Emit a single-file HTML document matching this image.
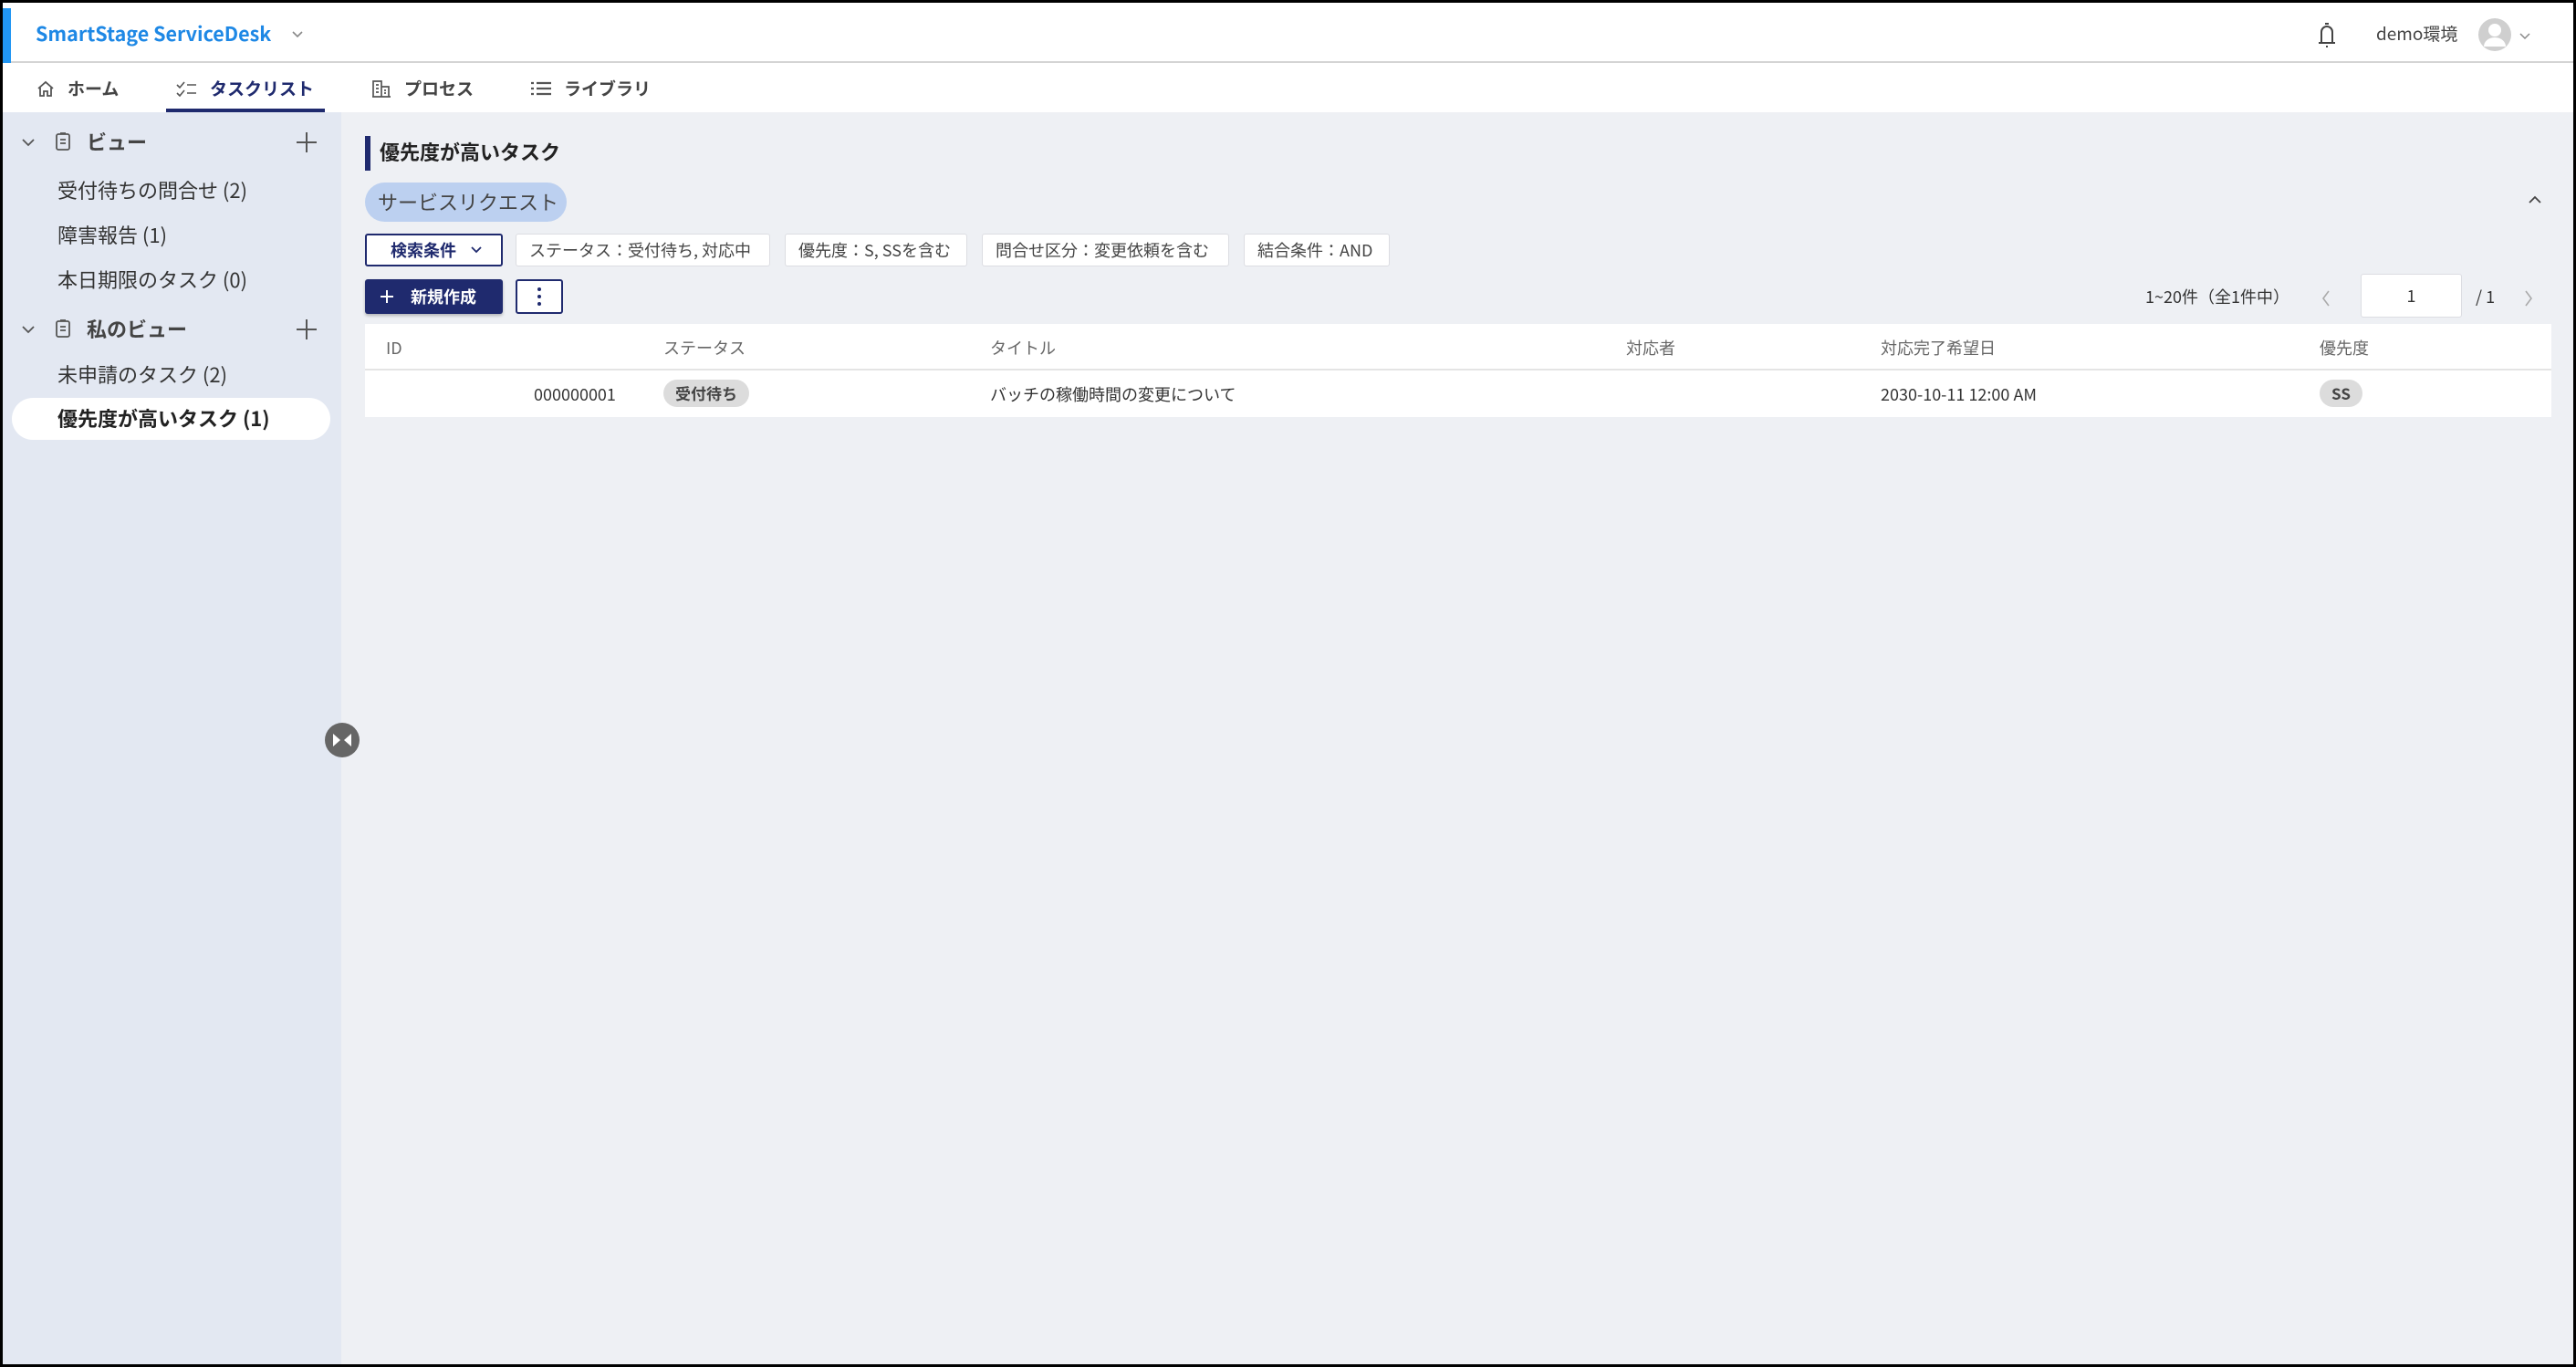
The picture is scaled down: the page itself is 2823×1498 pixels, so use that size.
<!DOCTYPE html>
<html><head><meta charset="utf-8"><style>
*{box-sizing:border-box;margin:0;padding:0}
body{width:2823px;height:1498px;overflow:hidden;background:#000;font-family:"Noto Sans CJK JP","Liberation Sans",sans-serif;color:#333;line-height:1.15}
#f{position:absolute;left:3px;top:3px;width:2817px;height:1492px;background:#eef0f4;overflow:hidden}
.a{position:absolute;white-space:nowrap}
#hdr{position:absolute;left:0;top:0;width:100%;height:66px;background:#fff;border-bottom:2px solid #d4d4d4}
#nav{position:absolute;left:0;top:66px;width:100%;height:54px;background:#fff}
#side{position:absolute;left:0;top:120px;width:371px;height:1380px;background:#e3e8f2}
.nt{font-size:19px;font-weight:bold;color:#444;top:17px}
.si{font-size:22px;color:#333;left:60px}
.chip{position:absolute;top:253px;height:36px;background:#fff;border:1px solid #dcdde2;border-radius:3px;font-size:18px;color:#444;line-height:34px;padding-left:14px}
.th{font-size:18px;color:#666;top:368px}
.td{font-size:18px;color:#333;top:419px}
</style></head><body><div id="f">
<div id="hdr">
 <div class="a" style="left:0;top:6px;width:9px;height:60px;background:#2196f3"></div>
 <div class="a" style="left:36px;top:22px;font-size:21.5px;font-weight:bold;color:#1e88e5">SmartStage ServiceDesk</div>
 <svg class="a" style="left:316px;top:30px" width="14" height="10"><path d="M2 2l5 5 5-5" stroke="#888" stroke-width="1.6" fill="none"/></svg>
 <svg class="a" style="left:2533px;top:18px" width="28" height="34"><path d="M8 26V14a6 6 0 0 1 12 0v12M5 26h18M12 5h4M14 29v2" stroke="#444" stroke-width="2" fill="none"/></svg>
 <div class="a" style="left:2601px;top:23px;font-size:19px;color:#444">demo環境</div>
 <svg class="a" style="left:2713px;top:16px" width="40" height="38"><circle cx="18" cy="19" r="18" fill="#cfcfcf"/><circle cx="18" cy="14" r="7" fill="#fff"/><path d="M6 32a12 10 0 0 1 24 0" fill="#fff"/></svg>
 <svg class="a" style="left:2758px;top:33px" width="12" height="8"><path d="M1 1l5 5 5-5" stroke="#888" stroke-width="1.5" fill="none"/></svg>
</div>
<div id="nav">
 <svg class="a" style="left:37px;top:19px" width="20" height="18"><path d="M2 9L10 2l8 7M4 8v9h4v-5h4v5h4V8" stroke="#555" stroke-width="1.8" fill="none"/></svg>
 <div class="a nt" style="left:71px">ホーム</div>
 <svg class="a" style="left:190px;top:19px" width="24" height="18"><path d="M1 5l3 3 5-6M1 14l3 3 5-6M12 5h10M12 14h10" stroke="#555" stroke-width="1.6" fill="none"/></svg>
 <div class="a nt" style="left:227px;color:#1f2a6e">タスクリスト</div>
 <div class="a" style="left:179px;top:50px;width:174px;height:4px;background:#1f2a6e"></div>
 <svg class="a" style="left:404px;top:18px" width="22" height="20"><path d="M2 19V2h9v17M11 8h8v11M1 19h20M5 6h3M5 10h3M5 14h3M14 12h2M14 15h2" stroke="#555" stroke-width="1.7" fill="none"/></svg>
 <div class="a nt" style="left:440px">プロセス</div>
 <svg class="a" style="left:578px;top:19px" width="24" height="18"><path d="M1 3h3M7 3h16M1 9h3M7 9h16M1 15h3M7 15h16" stroke="#555" stroke-width="2.2"/></svg>
 <div class="a nt" style="left:615px">ライブラリ</div>
</div>
<div id="side"></div>
<svg class="a" style="left:20px;top:147px" width="16" height="12"><path d="M2 3l6 6 6-6" stroke="#555" stroke-width="1.8" fill="none"/></svg>
<svg class="a" style="left:57px;top:141px" width="18" height="22"><rect x="2" y="3" width="14" height="17" rx="2" stroke="#555" stroke-width="1.8" fill="none"/><path d="M6 2h6M6 9h6M6 13h6" stroke="#555" stroke-width="1.8"/></svg>
<div class="a" style="left:92px;top:140px;font-size:22px;font-weight:bold;color:#444">ビュー</div>
<svg class="a" style="left:321px;top:141px" width="24" height="24"><path d="M12 1v22M1 12h22" stroke="#555" stroke-width="2"/></svg>
<div class="a si" style="top:193px">受付待ちの問合せ (2)</div>
<div class="a si" style="top:242px">障害報告 (1)</div>
<div class="a si" style="top:291px">本日期限のタスク (0)</div>
<svg class="a" style="left:20px;top:352px" width="16" height="12"><path d="M2 3l6 6 6-6" stroke="#555" stroke-width="1.8" fill="none"/></svg>
<svg class="a" style="left:57px;top:346px" width="18" height="22"><rect x="2" y="3" width="14" height="17" rx="2" stroke="#555" stroke-width="1.8" fill="none"/><path d="M6 2h6M6 9h6M6 13h6" stroke="#555" stroke-width="1.8"/></svg>
<div class="a" style="left:92px;top:345px;font-size:22px;font-weight:bold;color:#444">私のビュー</div>
<svg class="a" style="left:321px;top:346px" width="24" height="24"><path d="M12 1v22M1 12h22" stroke="#555" stroke-width="2"/></svg>
<div class="a si" style="top:395px">未申請のタスク (2)</div>
<div class="a" style="left:10px;top:433px;width:349px;height:46px;background:#fff;border-radius:23px"></div>
<div class="a si" style="top:443px;font-weight:bold;color:#222">優先度が高いタスク (1)</div>
<svg class="a" style="left:352px;top:788px" width="40" height="40"><circle cx="20" cy="20" r="19" fill="#666"/><path d="M10 13v14l8-7zM30 13v14l-8-7z" fill="#fff"/></svg>

<div class="a" style="left:397px;top:146px;width:6px;height:38px;background:#1f2a6e"></div>
<div class="a" style="left:413px;top:151px;font-size:22px;font-weight:bold;color:#222">優先度が高いタスク</div>
<div class="a" style="left:397px;top:197px;width:221px;height:43px;background:#bcd0f0;border-radius:22px;font-size:22px;color:#444;line-height:43px;padding-left:14px">サービスリクエスト</div>
<svg class="a" style="left:2767px;top:210px" width="16" height="12"><path d="M2 9l6-6 6 6" stroke="#444" stroke-width="1.8" fill="none"/></svg>

<div class="a" style="left:397px;top:253px;width:151px;height:36px;background:#fff;border:2px solid #1f2a6e;border-radius:3px;font-size:18px;font-weight:bold;color:#1f2a6e;line-height:32px;padding-left:26px">検索条件</div>
<svg class="a" style="left:513px;top:266px" width="12" height="9"><path d="M1 2l5 5 5-5" stroke="#1f2a6e" stroke-width="1.8" fill="none"/></svg>
<div class="chip" style="left:562px;width:279px">ステータス：受付待ち, 対応中</div>
<div class="chip" style="left:857px;width:200px">優先度：S, SSを含む</div>
<div class="chip" style="left:1073px;width:271px">問合せ区分：変更依頼を含む</div>
<div class="chip" style="left:1360px;width:160px">結合条件：AND</div>

<div class="a" style="left:397px;top:303px;width:151px;height:38px;background:#1f2a6e;border-radius:3px;box-shadow:0 2px 3px rgba(0,0,0,.25);font-size:18px;font-weight:bold;color:#fff;line-height:38px;padding-left:50px">新規作成</div>
<svg class="a" style="left:413px;top:314px" width="16" height="16"><path d="M8 1v14M1 8h14" stroke="#fff" stroke-width="2"/></svg>
<div class="a" style="left:562px;top:303px;width:52px;height:38px;background:#fff;border:2px solid #1f2a6e;border-radius:3px"></div>
<svg class="a" style="left:586px;top:311px" width="4" height="22"><circle cx="2" cy="3" r="2" fill="#1f2a6e"/><circle cx="2" cy="11" r="2" fill="#1f2a6e"/><circle cx="2" cy="19" r="2" fill="#1f2a6e"/></svg>

<div class="a" style="left:2348px;top:312px;font-size:18px;color:#333">1~20件（全1件中）</div>
<svg class="a" style="left:2540px;top:314px" width="12" height="20"><path d="M9 2L3 10l6 8" stroke="#aaa" stroke-width="1.6" fill="none"/></svg>
<div class="a" style="left:2584px;top:297px;width:111px;height:48px;background:#fff;border:1px solid #dcdde2;border-radius:3px;font-size:18px;text-align:center;line-height:46px">1</div>
<div class="a" style="left:2710px;top:312px;font-size:18px">/ 1</div>
<svg class="a" style="left:2762px;top:314px" width="12" height="20"><path d="M3 2l6 8-6 8" stroke="#aaa" stroke-width="1.6" fill="none"/></svg>

<div class="a" style="left:397px;top:352px;width:2396px;height:102px;background:#fff"></div>
<div class="a" style="left:397px;top:401px;width:2396px;height:2px;background:#e4e4e4"></div>
<div class="a th" style="left:420px">ID</div>
<div class="a th" style="left:724px">ステータス</div>
<div class="a th" style="left:1082px">タイトル</div>
<div class="a th" style="left:1779px">対応者</div>
<div class="a th" style="left:2058px">対応完了希望日</div>
<div class="a th" style="left:2539px">優先度</div>
<div class="a td" style="left:582px">000000001</div>
<div class="a" style="left:724px;top:413px;width:94px;height:30px;background:#dcdcdc;border-radius:15px;font-size:17px;font-weight:bold;color:#444;text-align:center;line-height:30px">受付待ち</div>
<div class="a td" style="left:1082px">バッチの稼働時間の変更について</div>
<div class="a td" style="left:2058px">2030-10-11 12:00 AM</div>
<div class="a" style="left:2539px;top:413px;width:47px;height:30px;background:#dcdcdc;border-radius:15px;font-size:17px;font-weight:bold;color:#444;text-align:center;line-height:30px">SS</div>
</div></body></html>
